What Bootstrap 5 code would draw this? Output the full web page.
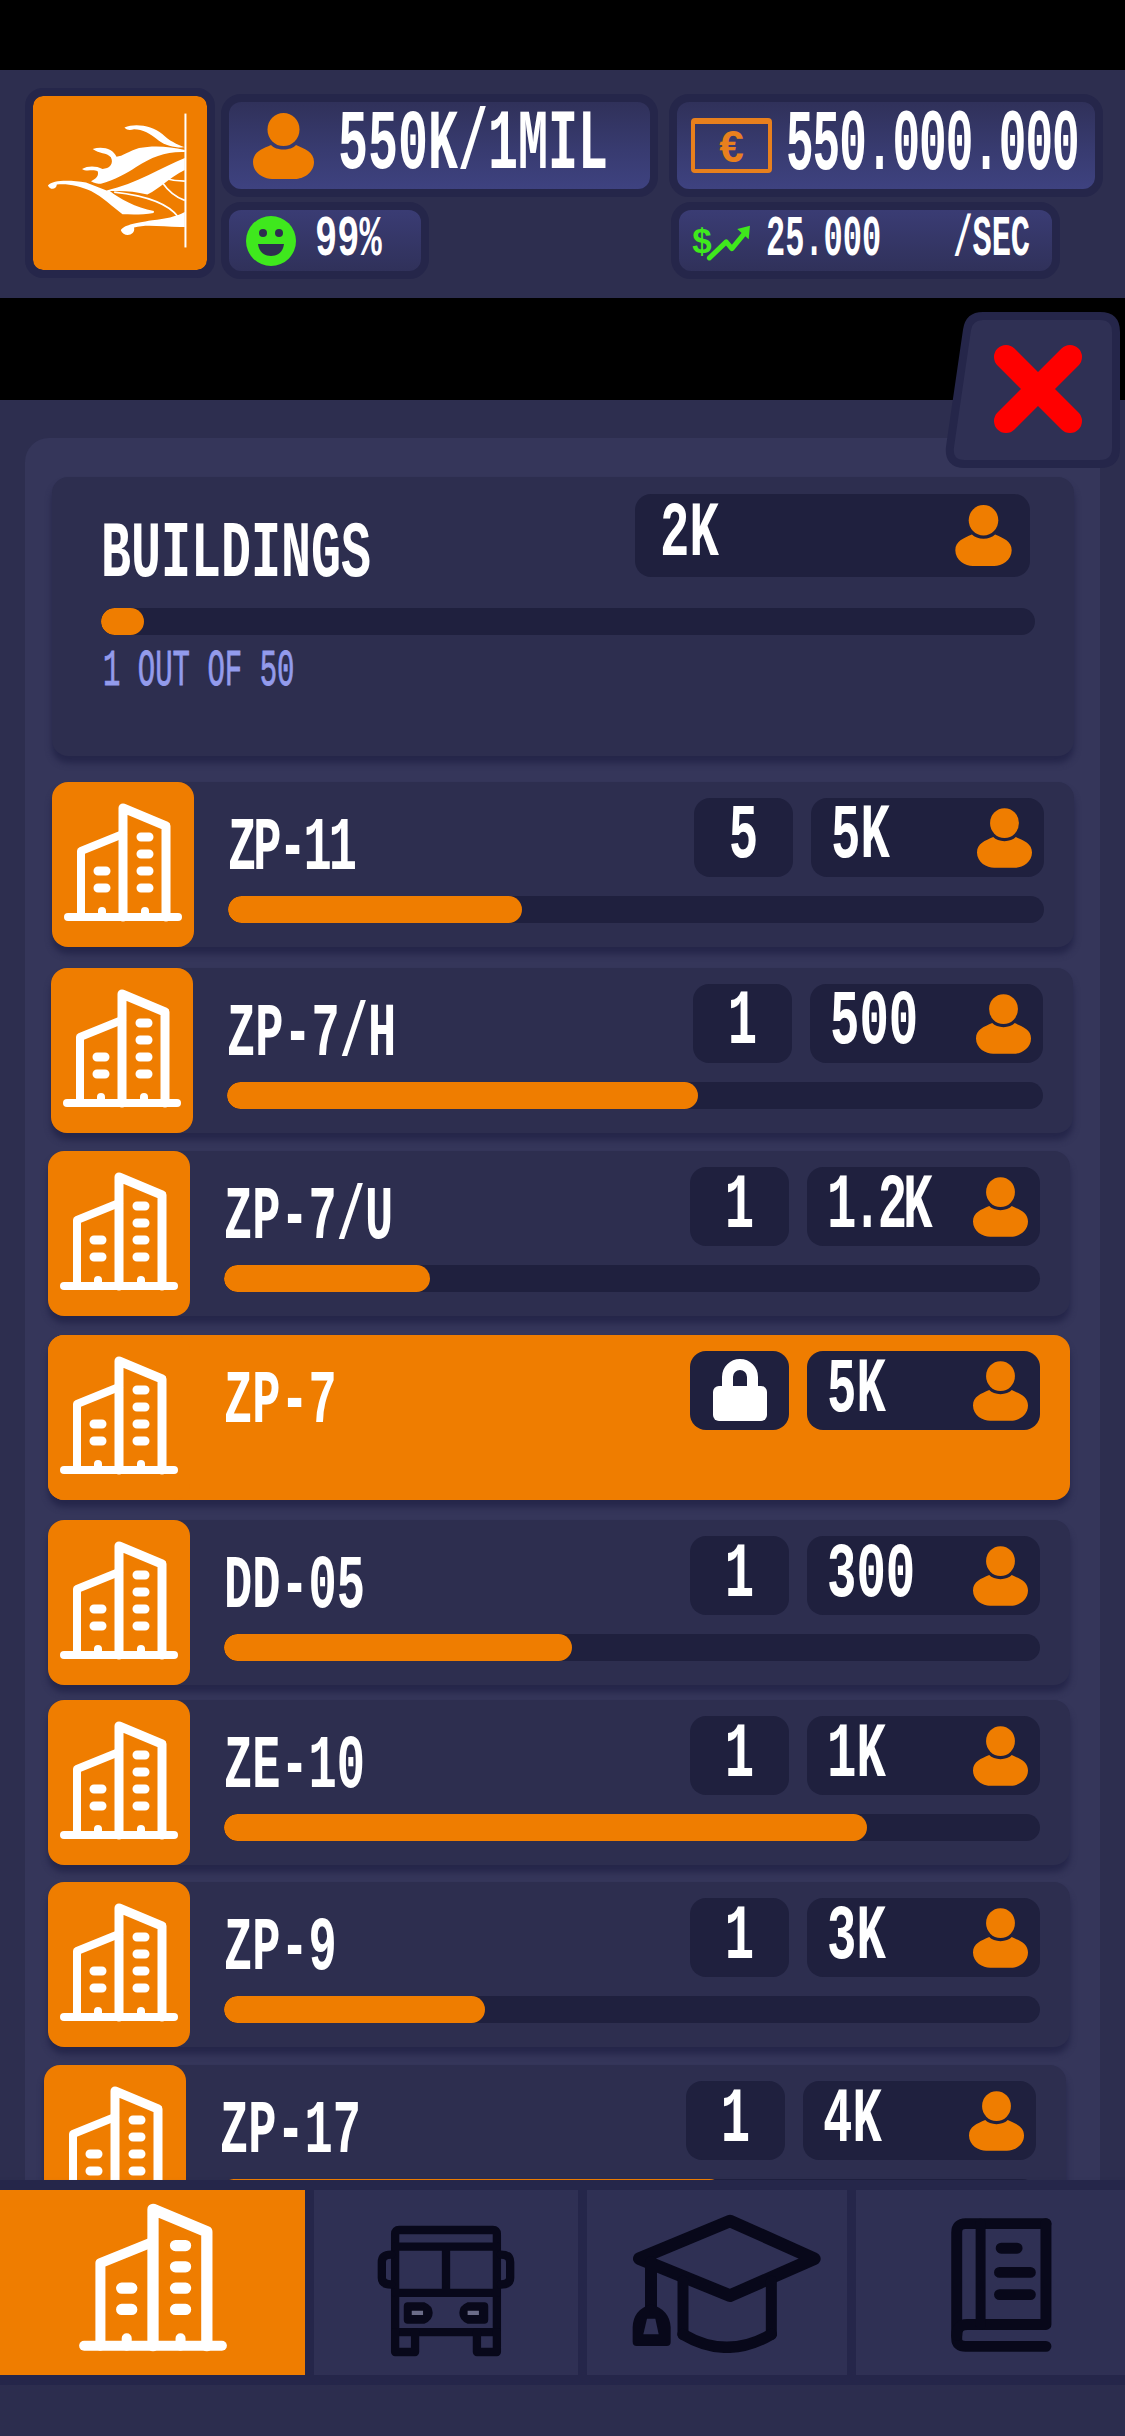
<!DOCTYPE html>
<html lang="en">
<head>
  <meta charset="UTF-8" />
  <meta name="viewport" content="width=device-width, initial-scale=1.0"/>
  <title>Buildings</title>
  <link href="https://cdn.jsdelivr.net/npm/bootstrap@5.3.3/dist/css/bootstrap.min.css" rel="stylesheet">
  <style>
    body { background: #000; font-family: "Liberation Mono", monospace; color: #fff; }
    .game { width: 1125px; height: 2436px; }

    /* slab text: mono font stretched up to get the tall narrow look */
    .slab { display: inline-block; font-weight: 700; line-height: 1; white-space: nowrap; }
    .t-pop { font-size: 50px; transform: scaleY(1.72); }
    .t-money { font-size: 46px; letter-spacing: -1px; transform: scaleY(1.9); }
    .t-stat { font-size: 37px; transform: scaleY(1.55); }
    .t-rate { font-size: 32px; transform: scaleY(1.8); }
    .t-title { font-size: 50px; transform: scaleY(1.6); }
    .t-sub { font-size: 29px; font-weight: 400; color: #939bec; transform: scaleY(1.8); -webkit-text-stroke: .5px #939bec; }
    .t-name { font-size: 47px; transform: scaleY(1.62); }
    .t-name.t-tight { letter-spacing: -3px; }
    .t-num { font-size: 49px; transform: scaleY(1.6); }
    .t-num.t-tight { letter-spacing: -4px; }

    .top-bar { flex: none; height: 228px; margin-top: 70px; background: #2d2e4f; padding: 18px 0 0 25px; gap: 6px; }
    .logo-box { width: 190px; height: 190px; border: 8px solid #25264a; border-radius: 18px; background: #ef7d00; background-clip: padding-box; }
    .logo-box svg { display: block; }
    .stat-col { margin-top: 6px; gap: 5px; }
    .hud-pill { border: 8px solid #25264a; border-radius: 20px; background: linear-gradient(#30315a, #383b70 55%, #3e4280); }
    .pill-pop { width: 437px; height: 103px; padding-left: 24px; gap: 24px; }
    .pill-happy { width: 208px; height: 77px; padding-left: 17px; gap: 19px; background: linear-gradient(#3a3c74, #30315a); }
    .pill-money { width: 434px; height: 103px; margin-left: 5px; padding-left: 14px; gap: 14px; }
    .pill-rate { width: 389px; height: 77px; margin-left: 7px; padding-left: 12px; background: linear-gradient(#3a3c74, #30315a); }
    .money-box { width: 81px; height: 55px; border: 4px solid #e8801d; border-top-width: 6px; border-radius: 4px; color: #e8801d; font: 700 44px/1 "Liberation Sans", sans-serif; }
    .rate-icon { margin-right: 13px; }
    .rate-per { margin-left: 72px; }

    .close-btn { top: 312px; left: 945px; z-index: 5; }

    .panel { margin-top: 102px; background: #2d2e4f; padding: 38px 25px 0; min-height: 0; }
    .inner-panel { background: #35365a; border-radius: 24px 24px 0 0; padding: 39px 26px 0 27px; min-height: 0; overflow: hidden; }

    .head-card { height: 279px; flex: none; background: #2d2e4f; border-radius: 16px; padding: 17px 39px 0 49px; box-shadow: 0 7px 6px #25264a; }
    .head-title { margin-top: 36px; }
    .dark-pill { background: #1f203e; border-radius: 16px; }
    .head-pop { width: 395px; height: 83px; margin-right: 5px; padding: 0 18px 0 25px; }
    .head-bar { margin-top: 28px; }
    .head-sub { margin-top: 22px; padding-left: 2px; }
    .bar-track { height: 27px; background: #1f203e; border-radius: 14px; }
    .bar-track .progress-bar { background: #ef7d00; border-radius: 14px; }

    .bld-row { flex: none; width: 1022px; height: 165px; margin-top: 18px; background: #2d2e4f; border-radius: 16px; box-shadow: 0 7px 6px #25264a; }
    .bld-row.first { margin-top: 26px; }
    .bld-row.gap-b { margin-top: 21px; margin-left: -1px; }
    .bld-row.shift { margin-left: -4px; }
    .bld-row.shift-x { margin-left: -8px; }
    .bld-row.gap-19 { margin-top: 19px; }
    .bld-row.gap-20 { margin-top: 20px; }
    .bld-row.gap-15 { margin-top: 15px; }
    .bld-row.gap-17 { margin-top: 17px; }
    .bld-row.locked { background: #ef7d00; }
    .bld-tile { width: 142px; background: #ef7d00; border-radius: 16px; padding: 21px 0 0 12px; }
    .bld-body { padding: 16px 30px 0 34px; min-width: 0; }
    .bld-top { height: 79px; }
    .bld-name { margin-top: 22px; }
    .count-pill { width: 99px; height: 79px; }
    .people-pill { width: 233px; height: 79px; margin-left: 18px; padding: 0 12px 0 20px; }
    .bld-bar { margin-top: 19px; }

    .bottom-nav { flex: none; height: 205px; background: #25264a; padding: 10px 0; gap: 9px; box-shadow: 0 6px 6px #25264a; }
    .nav-tab { background: #2f3054; }
    .nav-tab.active { background: #ef7d00; }
    .tab-a { width: 305px; padding-bottom: 10px; }
    .tab-b { width: 264px; padding: 16px 0 0 0; }
    .tab-c { width: 260px; padding: 0 0 0 20px; }
    .tab-d { width: 269px; padding: 4px 0 0 22px; }
    .nav-stroke { fill: none; stroke: #08081a; stroke-linecap: round; stroke-linejoin: round; }
    .bottom-pad { flex: none; height: 51px; background: #2c2d4e; }
  </style>
</head>
<body>

<!-- icon set -->
<svg width="0" height="0" class="position-absolute">
  <symbol id="ico-person" viewBox="0 0 61 66">
    <ellipse cx="30.5" cy="16.5" rx="16" ry="16.5" fill="#ef7d00"/>
    <path d="M0 49C0 39 9 36 18 32C23 38 38 38 43 32C52 36 61 39 61 49C61 60 50 66 42 66H19C11 66 0 60 0 49Z" fill="#ef7d00"/>
  </symbol>
  <symbol id="ico-building" viewBox="0 0 118 119">
    <g fill="none" stroke="#fff" stroke-linecap="round" stroke-linejoin="round">
      <path d="M4 114H114" stroke-width="8"/>
      <path d="M59 114V5L102 23V114" stroke-width="9"/>
      <path d="M17 114V48L59 31" stroke-width="8"/>
      <path d="M77 34H85M77 51H85M77 68H85M77 85H85M34 68H42M34 85H42" stroke-width="9"/>
      <path d="M38 108V114M81 108V114" stroke-width="8"/>
    </g>
  </symbol>
</svg>

<div class="game d-flex flex-column position-relative overflow-hidden">

  <!-- top hud -->
  <div class="top-bar d-flex">
    <div class="logo-box flex-shrink-0">
      <svg width="174" height="174" viewBox="40 35 525 525">
        <rect x="497" y="88" width="6" height="404" fill="#fff"/>
        <g fill="#fff">
          <path d="M316 130C350 116 400 125 430 150C450 170 475 182 498 190C470 192 440 185 420 170C395 148 370 135 345 135C335 138 325 140 316 130Z"/>
          <path d="M220 195C250 185 282 195 292 218C310 218 330 200 360 192C400 184 450 186 498 198V204C440 202 400 218 350 250C325 268 285 288 245 300C235 300 225 298 215 292C230 285 240 275 235 262C220 255 200 265 188 255C205 245 230 245 250 255C270 255 285 240 275 220C262 205 240 210 220 195Z"/>
          <path d="M85 305C100 288 150 288 200 296L262 320C350 300 430 250 498 222V258C450 282 425 312 385 332C345 322 310 320 272 322C300 345 350 372 405 382L404 388C370 394 335 392 310 392C280 370 250 340 215 322C180 305 140 298 112 302C110 318 92 320 85 305Z"/>
          <path d="M305 440C315 425 340 420 400 410C440 405 470 400 498 385V430C440 432 385 420 345 432C350 458 312 462 305 440Z"/>
        </g>
        <g fill="none" stroke="#fff" stroke-width="5">
          <path d="M430 296C450 325 475 342 498 350"/>
          <path d="M440 284C460 290 480 292 498 292"/>
          <path d="M285 325C375 335 450 360 480 402"/>
        </g>
      </svg>
    </div>

    <div class="stat-col d-flex flex-column">
      <div class="hud-pill pill-pop d-flex align-items-center">
        <svg width="61" height="66"><use href="#ico-person"/></svg>
        <span class="slab t-pop">550K/1MIL</span>
      </div>
      <div class="hud-pill pill-happy d-flex align-items-center">
        <svg width="50" height="50" viewBox="0 0 50 50">
          <circle cx="25" cy="25" r="25" fill="#3fe81d"/>
          <circle cx="17" cy="17" r="4" fill="#2d2e4f"/>
          <circle cx="33" cy="17" r="4" fill="#2d2e4f"/>
          <path d="M12 28H38C37 36 32 40 25 40C18 40 13 36 12 28Z" fill="#2d2e4f"/>
        </svg>
        <span class="slab t-stat">99%</span>
      </div>
    </div>

    <div class="stat-col d-flex flex-column">
      <div class="hud-pill pill-money d-flex align-items-center">
        <div class="money-box d-flex align-items-center justify-content-center">€</div>
        <span class="slab t-money">550.000.000</span>
      </div>
      <div class="hud-pill pill-rate d-flex align-items-center">
        <svg width="62" height="42" viewBox="90 385 185 125" class="rate-icon">
          <text x="94" y="482" font-family="Liberation Sans" font-weight="700" font-size="104" fill="#3fe81d">$</text>
          <path d="M145 498L195 450L212 470L252 422" fill="none" stroke="#3fe81d" stroke-width="15" stroke-linecap="round" stroke-linejoin="round"/>
          <path d="M228 412L266 402L262 442Z" fill="#3fe81d"/>
        </svg>
        <span class="slab t-rate">25.000</span>
        <span class="slab t-rate rate-per">/SEC</span>
      </div>
    </div>
  </div>

  <!-- close button sits over the panel corner -->
  <svg class="close-btn position-absolute" width="175" height="156" viewBox="0 0 175 156">
    <path d="M38 4H155Q171 4 171 20V136Q171 152 155 152H20Q3 152 5 135L22 18Q24 4 38 4Z" fill="#2f3054" stroke="#25264a" stroke-width="8"/>
    <path d="M61 45L125 109M125 45L61 109" stroke="#f00" stroke-width="24" stroke-linecap="round"/>
  </svg>

  <!-- buildings panel -->
  <div class="panel flex-grow-1 d-flex flex-column">
    <div class="inner-panel flex-grow-1 d-flex flex-column">

      <div class="head-card">
        <div class="d-flex justify-content-between align-items-start">
          <span class="slab t-title head-title">BUILDINGS</span>
          <div class="dark-pill head-pop d-flex align-items-center justify-content-between">
            <span class="slab t-num">2K</span>
            <svg width="57" height="61"><use href="#ico-person"/></svg>
          </div>
        </div>
        <div class="progress bar-track head-bar">
          <div class="progress-bar" style="width: 4.6%"></div>
        </div>
        <div class="head-sub"><span class="slab t-sub">1 OUT OF 50</span></div>
      </div>

      <div class="bld-row first d-flex">
        <div class="bld-tile flex-shrink-0"><svg width="118" height="119"><use href="#ico-building"/></svg></div>
        <div class="bld-body flex-grow-1">
          <div class="bld-top d-flex align-items-start">
            <div class="bld-top d-flex align-items-center flex-grow-1"><span class="slab t-name t-tight bld-name">ZP-11</span></div>
            <div class="dark-pill count-pill d-flex align-items-center justify-content-center"><span class="slab t-num">5</span></div>
            <div class="dark-pill people-pill d-flex align-items-center justify-content-between"><span class="slab t-num">5K</span><svg width="55" height="60"><use href="#ico-person"/></svg></div>
          </div>
          <div class="progress bar-track bld-bar"><div class="progress-bar" style="width: 36%"></div></div>
        </div>
      </div>

      <div class="bld-row gap-b d-flex">
        <div class="bld-tile flex-shrink-0"><svg width="118" height="119"><use href="#ico-building"/></svg></div>
        <div class="bld-body flex-grow-1">
          <div class="bld-top d-flex align-items-start">
            <div class="bld-top d-flex align-items-center flex-grow-1"><span class="slab t-name bld-name">ZP-7/H</span></div>
            <div class="dark-pill count-pill d-flex align-items-center justify-content-center"><span class="slab t-num">1</span></div>
            <div class="dark-pill people-pill d-flex align-items-center justify-content-between"><span class="slab t-num">500</span><svg width="55" height="60"><use href="#ico-person"/></svg></div>
          </div>
          <div class="progress bar-track bld-bar"><div class="progress-bar" style="width: 57.7%"></div></div>
        </div>
      </div>

      <div class="bld-row shift d-flex">
        <div class="bld-tile flex-shrink-0"><svg width="118" height="119"><use href="#ico-building"/></svg></div>
        <div class="bld-body flex-grow-1">
          <div class="bld-top d-flex align-items-start">
            <div class="bld-top d-flex align-items-center flex-grow-1"><span class="slab t-name bld-name">ZP-7/U</span></div>
            <div class="dark-pill count-pill d-flex align-items-center justify-content-center"><span class="slab t-num">1</span></div>
            <div class="dark-pill people-pill d-flex align-items-center justify-content-between"><span class="slab t-num t-tight">1.2K</span><svg width="55" height="60"><use href="#ico-person"/></svg></div>
          </div>
          <div class="progress bar-track bld-bar"><div class="progress-bar" style="width: 25.2%"></div></div>
        </div>
      </div>

      <div class="bld-row locked shift gap-19 d-flex">
        <div class="bld-tile flex-shrink-0"><svg width="118" height="119"><use href="#ico-building"/></svg></div>
        <div class="bld-body flex-grow-1">
          <div class="bld-top d-flex align-items-start">
            <div class="bld-top d-flex align-items-center flex-grow-1"><span class="slab t-name bld-name">ZP-7</span></div>
            <div class="dark-pill count-pill d-flex align-items-center justify-content-center">
              <svg width="54" height="63" viewBox="0 0 54 63"><path d="M14.5 30V18a12.5 12.5 0 0 1 25 0V30" fill="none" stroke="#fff" stroke-width="11"/><rect y="27" width="54" height="35" rx="6" fill="#fff"/></svg>
            </div>
            <div class="dark-pill people-pill d-flex align-items-center justify-content-between"><span class="slab t-num">5K</span><svg width="55" height="60"><use href="#ico-person"/></svg></div>
          </div>
        </div>
      </div>

      <div class="bld-row shift gap-20 d-flex">
        <div class="bld-tile flex-shrink-0"><svg width="118" height="119"><use href="#ico-building"/></svg></div>
        <div class="bld-body flex-grow-1">
          <div class="bld-top d-flex align-items-start">
            <div class="bld-top d-flex align-items-center flex-grow-1"><span class="slab t-name bld-name">DD-05</span></div>
            <div class="dark-pill count-pill d-flex align-items-center justify-content-center"><span class="slab t-num">1</span></div>
            <div class="dark-pill people-pill d-flex align-items-center justify-content-between"><span class="slab t-num">300</span><svg width="55" height="60"><use href="#ico-person"/></svg></div>
          </div>
          <div class="progress bar-track bld-bar"><div class="progress-bar" style="width: 42.6%"></div></div>
        </div>
      </div>

      <div class="bld-row shift gap-15 d-flex">
        <div class="bld-tile flex-shrink-0"><svg width="118" height="119"><use href="#ico-building"/></svg></div>
        <div class="bld-body flex-grow-1">
          <div class="bld-top d-flex align-items-start">
            <div class="bld-top d-flex align-items-center flex-grow-1"><span class="slab t-name bld-name">ZE-10</span></div>
            <div class="dark-pill count-pill d-flex align-items-center justify-content-center"><span class="slab t-num">1</span></div>
            <div class="dark-pill people-pill d-flex align-items-center justify-content-between"><span class="slab t-num">1K</span><svg width="55" height="60"><use href="#ico-person"/></svg></div>
          </div>
          <div class="progress bar-track bld-bar"><div class="progress-bar" style="width: 78.8%"></div></div>
        </div>
      </div>

      <div class="bld-row shift gap-17 d-flex">
        <div class="bld-tile flex-shrink-0"><svg width="118" height="119"><use href="#ico-building"/></svg></div>
        <div class="bld-body flex-grow-1">
          <div class="bld-top d-flex align-items-start">
            <div class="bld-top d-flex align-items-center flex-grow-1"><span class="slab t-name bld-name">ZP-9</span></div>
            <div class="dark-pill count-pill d-flex align-items-center justify-content-center"><span class="slab t-num">1</span></div>
            <div class="dark-pill people-pill d-flex align-items-center justify-content-between"><span class="slab t-num">3K</span><svg width="55" height="60"><use href="#ico-person"/></svg></div>
          </div>
          <div class="progress bar-track bld-bar"><div class="progress-bar" style="width: 32%"></div></div>
        </div>
      </div>

      <div class="bld-row shift-x d-flex">
        <div class="bld-tile flex-shrink-0"><svg width="118" height="119"><use href="#ico-building"/></svg></div>
        <div class="bld-body flex-grow-1">
          <div class="bld-top d-flex align-items-start">
            <div class="bld-top d-flex align-items-center flex-grow-1"><span class="slab t-name bld-name">ZP-17</span></div>
            <div class="dark-pill count-pill d-flex align-items-center justify-content-center"><span class="slab t-num">1</span></div>
            <div class="dark-pill people-pill d-flex align-items-center justify-content-between"><span class="slab t-num">4K</span><svg width="55" height="60"><use href="#ico-person"/></svg></div>
          </div>
          <div class="progress bar-track bld-bar"><div class="progress-bar" style="width: 61.6%"></div></div>
        </div>
      </div>

    </div>
  </div>

  <!-- bottom tabs -->
  <div class="bottom-nav d-flex">
    <div class="nav-tab active tab-a d-flex align-items-center justify-content-center">
      <svg width="148" height="149"><use href="#ico-building"/></svg>
    </div>
    <div class="nav-tab tab-b d-flex align-items-center justify-content-center">
      <svg width="140" height="133" viewBox="75 100 420 400">
        <g class="nav-stroke" stroke-width="25">
          <path d="M132 425V130Q132 118 144 118H426Q438 118 438 130V425"/>
          <path d="M132 168H438M132 307H438M132 425H438M285 168V307"/>
          <path d="M132 425V485H192V425M378 425V485H438V425"/>
          <path d="M120 192Q92 192 92 215V262Q92 282 120 282M450 192Q478 192 478 215V262Q478 282 450 282"/>
        </g>
        <path d="M170 335H220Q245 345 245 367Q245 390 220 400H170Q158 400 158 388V347Q158 335 170 335ZM350 335H400Q412 335 412 347V388Q412 400 400 400H350Q325 390 325 367Q325 345 350 335Z" fill="#08081a"/>
        <path d="M182 361H216V374H182ZM350 361H384V374H350Z" fill="#6b6c88"/>
      </svg>
    </div>
    <div class="nav-tab tab-c d-flex align-items-center justify-content-center">
      <svg width="190" height="140" viewBox="848 68 570 420">
        <g class="nav-stroke">
          <path d="M1142 92L1395 205L1142 316L870 205Z" stroke-width="38"/>
          <path d="M1001 272V432M1266 272V432" stroke-width="33"/>
          <path d="M1001 432Q1132 510 1266 432" stroke-width="34"/>
          <path d="M905 215V350" stroke-width="36"/>
        </g>
        <path d="M905 342Q852 358 850 410V455Q850 467 862 467H952Q964 467 964 455V410Q960 358 905 342Z" fill="#08081a"/>
        <path d="M893 385H918L928 432H882Z" fill="#2f3054"/>
      </svg>
    </div>
    <div class="nav-tab tab-d d-flex align-items-center justify-content-center">
      <svg width="103" height="136" viewBox="298 78 310 410">
        <g class="nav-stroke" stroke-width="33">
          <path d="M587 98H345Q318 98 318 125V445Q318 468 345 468H587"/>
          <path d="M587 98V402H350Q318 402 318 435"/>
          <path d="M390 98V402" stroke-width="30"/>
          <path d="M452 172H500M447 245H540M447 312H540"/>
        </g>
      </svg>
    </div>
  </div>
  <div class="bottom-pad"></div>
</div>

<script src="https://cdn.jsdelivr.net/npm/bootstrap@5.3.3/dist/js/bootstrap.bundle.min.js"></script>
</body>
</html>
